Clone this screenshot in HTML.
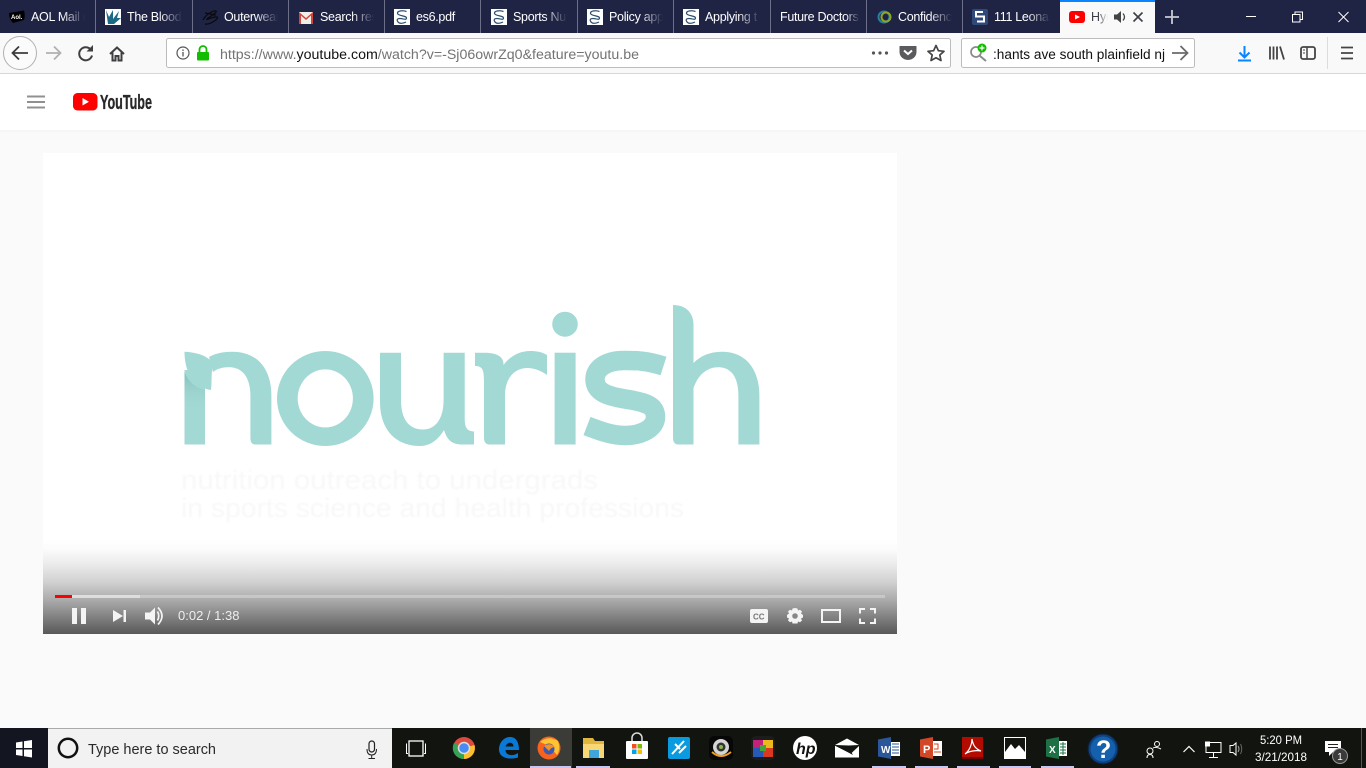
<!DOCTYPE html>
<html lang="en"><head><meta charset="utf-8"><title>YouTube</title>
<style>
html,body{margin:0;padding:0;width:1366px;height:768px;overflow:hidden;background:#fafafa}
svg{display:block}
text{font-family:"Liberation Sans",sans-serif}
.t{fill:#fff;font-size:12.5px;letter-spacing:-.3px}
</style></head><body>
<svg width="1366" height="768" viewBox="0 0 1366 768" xmlns="http://www.w3.org/2000/svg">
<defs>
<linearGradient id="vg" x1="0" y1="0" x2="0" y2="1">
<stop offset="0" stop-color="#fff"/><stop offset=".1" stop-color="#fbfbfb"/><stop offset=".25" stop-color="#ececec"/><stop offset=".44" stop-color="#d2d2d2"/><stop offset=".65" stop-color="#a8a8a8"/><stop offset=".85" stop-color="#7a7a7a"/><stop offset="1" stop-color="#585858"/>
</linearGradient>
<linearGradient id="fd" x1="0" y1="0" x2="1" y2="0"><stop offset="0" stop-color="#1f2344" stop-opacity="0"/><stop offset=".7" stop-color="#1f2344"/><stop offset="1" stop-color="#1f2344"/></linearGradient>
<linearGradient id="fa" x1="0" y1="0" x2="1" y2="0"><stop offset="0" stop-color="#f9f9fa" stop-opacity="0"/><stop offset="1" stop-color="#f9f9fa"/></linearGradient>
<linearGradient id="sh" x1="0" y1="0" x2="0" y2="1"><stop offset="0" stop-color="#7fbdb9" stop-opacity=".9"/><stop offset="1" stop-color="#a3d9d5" stop-opacity="0"/></linearGradient>
<g id="sp"><rect width="16" height="16" fill="#fff"/><path d="M12.500 2.500C8 1 3 2 3.500 4.500S12.500 6.500 12.500 9 9 9.500 6 9.500 2.500 11 4 13 9 14.500 12 13" fill="none" stroke="#2d4f70" stroke-width="1.200"/></g>
</defs>

<!-- tab bar -->
<rect width="1366" height="33" fill="#1f2344"/>

<path d="M9 13L24 10.500Q25.500 16 24 20L13 23Q9 19 9 13Z" fill="#000"/><text x="11" y="19" font-weight="700" fill="#fff" style="font-size:6px">Aol.</text>
<text class="t" x="31" y="21">AOL Mail (</text>

<rect x="105" y="9" width="16" height="16" fill="#fff"/><path d="M106 10L109 17L113 10L113 19L119 11L117 18L121 18L114 24L108 24Z" fill="#1a6a86"/>
<text class="t" x="127" y="21">The Blood</text>

<path d="M203 20C206 14 214 10 216 11S209 17 207 19 214 16 217 17 210 25 205 24M205 13L216 15" fill="none" stroke="#0a0a0a" stroke-width="1.200"/>
<text class="t" x="224" y="21">Outerwear</text>

<rect x="299" y="12" width="14" height="12" fill="#f1eeea"/><path d="M299 12L306 18L313 12V24H311V15.500L306 20L301 15.500V24H299Z" fill="#d1453b"/>
<text class="t" x="320" y="21">Search resu</text>

<use href="#sp" x="394" y="9"/><text class="t" x="416" y="21">es6.pdf</text>
<use href="#sp" x="491" y="9"/><text class="t" x="513" y="21">Sports Nut</text>
<use href="#sp" x="587" y="9"/><text class="t" x="609" y="21">Policy app</text>
<use href="#sp" x="683" y="9"/><text class="t" x="705" y="21">Applying t</text>
<text class="t" x="780" y="21">Future Doctors</text>
<circle cx="884" cy="17" r="5.500" fill="none" stroke="#2a7f9e" stroke-width="2"/><circle cx="886" cy="17" r="4.500" fill="none" stroke="#8fa821" stroke-width="2"/>
<text class="t" x="898" y="21">Confidenc</text>
<rect x="972" y="9" width="16" height="16" rx="2" fill="#2f4a78"/><path d="M983 12H976V16.500H984V21.500H977" fill="none" stroke="#fff" stroke-width="2"/>
<text class="t" x="994" y="21">111 Leonar</text>

<rect x="62" y="3" width="33" height="28" fill="url(#fd)"/><rect x="159" y="3" width="33" height="28" fill="url(#fd)"/><rect x="255" y="3" width="33" height="28" fill="url(#fd)"/><rect x="351" y="3" width="33" height="28" fill="url(#fd)"/><rect x="544" y="3" width="33" height="28" fill="url(#fd)"/><rect x="640" y="3" width="33" height="28" fill="url(#fd)"/><rect x="737" y="3" width="33" height="28" fill="url(#fd)"/><rect x="845" y="3" width="21" height="28" fill="url(#fd)"/><rect x="929" y="3" width="33" height="28" fill="url(#fd)"/><rect x="1027" y="3" width="33" height="28" fill="url(#fd)"/>
<g stroke="#6c6f88" stroke-width="1"><path d="M95.500 0V33M192.500 0V33M288.500 0V33M384.500 0V33M480.500 0V33M577.500 0V33M673.500 0V33M770.500 0V33M866.500 0V33M962.500 0V33"/></g>

<!-- active tab -->
<rect x="1060" y="0" width="95" height="33" fill="#f9f9fa"/><rect x="1060" y="0" width="95" height="2" fill="#0a84ff"/>
<rect x="1069" y="11" width="16" height="12" rx="3" fill="#f00"/><path d="M1075 14.500L1080 17L1075 19.500Z" fill="#fff"/>
<text x="1091" y="21" fill="#3c3c46" style="font-size:12.500px">Hyd</text>
<rect x="1098" y="5" width="10" height="26" fill="url(#fa)"/><rect x="1108" y="5" width="5" height="26" fill="#f9f9fa"/>
<path d="M1114 14.500H1117L1121 11V23L1117 19.500H1114Z" fill="#444"/><path d="M1123 13.500Q1126 17 1123 20.500" fill="none" stroke="#444" stroke-width="1.300"/>
<path d="M1133.500 12.500L1142.500 21.500M1142.500 12.500L1133.500 21.500" stroke="#3f3f46" stroke-width="1.600"/>
<path d="M1172 10V24M1165 17H1179" stroke="#c9cad4" stroke-width="1.800"/>
<!-- window controls -->
<path d="M1246 16.500H1256" stroke="#fff" stroke-width="1"/>
<path d="M1292.500 14.500h7.500v7.500h-7.500zM1295 14.500v-2.500h7.500v7.500h-2.500" fill="none" stroke="#fff" stroke-width="1"/>
<path d="M1338.500 12L1348.500 22M1348.500 12L1338.500 22" stroke="#fff" stroke-width="1"/>

<!-- toolbar -->
<rect y="33" width="1366" height="40" fill="#f9f9fa"/><rect y="73" width="1366" height="1" fill="#d7d7db"/>
<circle cx="20" cy="53" r="16.500" fill="#fbfbfb" stroke="#b1b1b3"/>
<path d="M28 53H13M19 46.500L12.500 53L19 59.500" fill="none" stroke="#3c3c3f" stroke-width="1.800"/>
<path d="M61 53H46M54 46.500L60.500 53L54 59.500" fill="none" stroke="#b1b1b3" stroke-width="1.800"/>
<path d="M91 50A6.500 6.500 0 1 0 92 55.500" fill="none" stroke="#3f3f42" stroke-width="2"/><path d="M93 45V51.500H86.500Z" fill="#3f3f42"/>
<path d="M110 54L117 47.500L124 54M112.500 52.500V60.500H115.500V56H118.500V60.500H121.500V52.500" fill="none" stroke="#3f3f42" stroke-width="2"/>

<rect x="166.500" y="38.500" width="784" height="29" rx="2" fill="#fff" stroke="#bcbcbe"/>
<circle cx="183" cy="53" r="6" fill="none" stroke="#555" stroke-width="1.200"/><path d="M183 52V56.500M183 49.500V51" stroke="#555" stroke-width="1.300"/>
<rect x="197" y="52" width="12" height="8.500" rx="1" fill="#12bc00"/><path d="M199.500 52V49.500A3.500 3.500 0 0 1 206.500 49.500V52" fill="none" stroke="#12bc00" stroke-width="1.800"/>
<text y="59" x="220" fill="#737373" textLength="419" lengthAdjust="spacingAndGlyphs" style="font-size:13.500px">https://www.<tspan fill="#111">youtube.com</tspan>/watch?v=-Sj06owrZq0&amp;feature=youtu.be</text>
<circle cx="873.500" cy="53" r="1.600" fill="#555"/><circle cx="880" cy="53" r="1.600" fill="#555"/><circle cx="886.500" cy="53" r="1.600" fill="#555"/>
<path d="M900 46.500H916V52A8 7.500 0 0 1 900 52Z" fill="#5b5b5e" stroke="#5b5b5e" stroke-linejoin="round" stroke-width="1"/><path d="M904 50.500L908 54L912 50.500" fill="none" stroke="#fff" stroke-width="2"/>
<path d="M936 45.500L938.400 50.700L944 51.300L939.800 55L941 60.500L936 57.700L931 60.500L932.200 55L928 51.300L933.600 50.700Z" fill="none" stroke="#444" stroke-width="1.700" stroke-linejoin="round"/>

<rect x="961.500" y="38.500" width="233" height="29" rx="2" fill="#fff" stroke="#bcbcbe"/>
<circle cx="976" cy="52" r="5" fill="none" stroke="#8a8a8a" stroke-width="1.700"/><path d="M980 56L986 61" stroke="#8a8a8a" stroke-width="2"/>
<circle cx="982" cy="48" r="4.500" fill="#12bc00"/><path d="M982 45.500V50.500M979.500 48H984.500" stroke="#fff" stroke-width="1.200"/>
<text x="993" y="59" fill="#111" textLength="172" lengthAdjust="spacingAndGlyphs" style="font-size:13.500px">:hants ave south plainfield nj</text>
<path d="M1172 53H1187M1180.500 46L1187.500 53L1180.500 60" fill="none" stroke="#6a6a6a" stroke-width="1.800"/>

<path d="M1244.500 46V57M1239.500 52.500L1244.500 57.500L1249.500 52.500" fill="none" stroke="#0a84ff" stroke-width="2"/><rect x="1238" y="59.500" width="13" height="2" fill="#0a84ff"/>
<path d="M1270 46.500V59.500M1273.500 46.500V59.500M1277 46.500V59.500M1280 46.500L1284 59.500" stroke="#444" stroke-width="1.800" fill="none"/>
<rect x="1301" y="47" width="14" height="12" rx="2" fill="none" stroke="#444" stroke-width="1.800"/><path d="M1307 47V59" stroke="#444" stroke-width="1.500"/><path d="M1303 50H1305M1303 53H1305" stroke="#444"/>
<rect x="1327" y="37" width="1" height="32" fill="#dcdcdf"/>
<path d="M1341 47.500H1353M1341 53H1353M1341 58.500H1353" stroke="#444" stroke-width="1.800"/>

<!-- youtube masthead -->
<rect y="74" width="1366" height="56" fill="#fff"/>
<rect y="130" width="1366" height="2" fill="#f6f6f6"/>
<path d="M27 96.500H45M27 102H45M27 107.500H45" stroke="#909090" stroke-width="2"/>
<rect x="73" y="93" width="24.500" height="17.500" rx="4.500" fill="#f00"/><path d="M82.500 98L89 101.700L82.500 105.500Z" fill="#fff"/>
<text x="100" y="109" font-weight="700" fill="#282828" stroke="#282828" stroke-width=".35" textLength="52" lengthAdjust="spacingAndGlyphs" style="font-size:20px">YouTube</text>

<!-- video -->
<rect x="43" y="153" width="854" height="481" fill="#fff"/>
<rect x="43" y="540" width="854" height="94" fill="url(#vg)"/>

<!-- nourish logo -->
<g fill="#a3d9d5">
<!-- n -->
<rect x="184.500" y="370" width="20.500" height="74.500"/>
<path d="M271.400 444.500V396C271.400 368 257 351.700 232 351.700C224 351.700 216 353 209 357L213 372C218 368 224 367.300 229 367.300C243 367.300 250.400 378 250.400 396V438C250.400 442 252 444.500 255 444.500Z"/>
<path d="M184.500 351.700C198 352.500 209 356 213 364C211 373 212 382 211 390C197 388 184.500 376 184.500 351.700Z"/>
<!-- o -->
<path fill-rule="evenodd" d="M277 398.500A48.300 47.500 0 1 0 373.600 398.500A48.300 47.500 0 1 0 277 398.500ZM297.700 398.400A27.600 29 0 1 1 352.900 398.400A27.600 29 0 1 1 297.700 398.400Z"/>
<!-- u -->
<path d="M380 352.700H401V400C401 418 408 429.500 423 429.500C436 429.500 443.600 418 443.600 400V352.700H464.700V418C464.700 428 467 431 474 431.500V444.500H462C452 444.500 447 440 444 430C438 440 430 446 420 446C396 446 380 430 380 402Z"/>
<!-- r -->
<path d="M475 352.700H484C496 352.700 504 356 503.500 365C510 356 520 351 530 351C537 351 542 352 547 355V375C540 370 533 368 527 368C515 368 505 378 505 395V444.500H489C486 444.500 484 442 484 438V385C484 372 484 366 475 366Z"/>
<!-- i -->
<ellipse cx="565" cy="324.200" rx="12.800" ry="12.500"/>
<rect x="554.600" y="352.700" width="21" height="91.800"/>
<!-- h -->
<path d="M673 305C685 305 693.500 312 693.500 325V444.500H678C675 444.500 673 442 673 438Z"/>
<path d="M759.400 444.500V396C759.400 368 745 351.700 722 351.700C710 351.700 700 356 693.500 363V388C698 375 707 367.300 718 367.300C732 367.300 738.400 378 738.400 396V444.500Z"/>
</g>
<!-- s -->
<path d="M663.500 366C645 360 633 360.500 624 360.500C607 360.500 595 368 595 379C595 392 607 396 625 399C645 402 655.500 405 655.500 417C655.500 428 642 435.500 625 435.500C612 435.500 600 431 587 426" fill="none" stroke="#a3d9d5" stroke-width="19.500"/>
<path d="M184.500 372C188 381 195 388 205 390V412H184.500Z" fill="url(#sh)"/>
<g fill="#f8f8f9" style="filter:blur(.8px)">
<text x="181" y="489" textLength="417" lengthAdjust="spacingAndGlyphs" style="font-size:27px">nutrition outreach to undergrads</text>
<text x="181" y="517" textLength="503" lengthAdjust="spacingAndGlyphs" style="font-size:27px">in sports science and health professions</text>
</g>

<!-- player controls -->
<rect x="55" y="595" width="830" height="3" fill="#fff" fill-opacity=".28"/>
<rect x="55" y="595" width="85" height="3" fill="#fff" fill-opacity=".4"/>
<rect x="55" y="595" width="17" height="3" fill="#f00"/>
<g fill="#f4f4f4">
<rect x="72" y="608" width="5" height="16"/><rect x="81" y="608" width="5" height="16"/>
<path d="M113 610L123 616L113 622Z"/><rect x="123.500" y="610" width="2.500" height="12"/>
<path d="M145 612.500H150L155 607.500V624.500L150 619.500H145Z"/>
</g>
<path d="M157.500 611.500Q160 616 157.500 620.500M158 607.500Q166 616 158 624.500" fill="none" stroke="#f4f4f4" stroke-width="1.700"/>
<text x="178" y="620" fill="#eee" style="font-size:13px">0:02 / 1:38</text>
<rect x="750" y="609" width="18" height="14" rx="2" fill="#f4f4f4"/>
<text x="753" y="619.500" font-weight="700" fill="#777" style="font-size:8px">CC</text>
<path d="M795 608L797.500 608.500L798 610.500L800 609.800L802 611.500L801 613.500L803 615V617.500L801 618.500L802 620.500L800 622.300L798 621.500L797.500 623.500H792.500L792 621.500L790 622.300L788 620.500L789 618.500L787 617.500V615L789 613.500L788 611.500L790 609.800L792 610.500L792.500 608.500Z" fill="#f4f4f4"/><circle cx="795" cy="616" r="2.800" fill="#888"/>
<rect x="822" y="610" width="18" height="12" fill="none" stroke="#f4f4f4" stroke-width="2"/>
<path d="M860 613.500V609H865M870 609H875V613.500M875 618.500V623H870M865 623H860V618.500" fill="none" stroke="#f4f4f4" stroke-width="2"/>

<!-- taskbar -->
<rect y="728" width="1366" height="40" fill="#12150f"/>
<rect x="0" y="728" width="48" height="40" fill="#131520"/>
<path d="M16 742.500L22.500 741.500V748H16ZM24 741.300L32 740V748H24ZM16 749.500H22.500V756L16 755ZM24 749.500H32V757.500L24 756.300Z" fill="#fff"/>
<rect x="48" y="728" width="344" height="40" fill="#f2f2f2"/><rect x="48" y="728" width="344" height="1" fill="#a9a9a9"/>
<circle cx="68" cy="748" r="9.200" fill="none" stroke="#111" stroke-width="2.500"/>
<text x="88" y="754" fill="#2a2a2a" textLength="128" lengthAdjust="spacingAndGlyphs" style="font-size:14.500px">Type here to search</text>
<rect x="369" y="741" width="5.500" height="11" rx="2.700" fill="none" stroke="#222" stroke-width="1.200"/><path d="M367 749Q367 755 371.700 755T376.500 749M371.700 755V758M368.500 758.500H375" fill="none" stroke="#222"/>

<rect x="409" y="741" width="14" height="15" fill="none" stroke="#fff" stroke-width="1.300"/><path d="M406.500 743.500V753.500H408M425.500 743.500V753.500H424" fill="none" stroke="#fff"/>

<!-- chrome -->
<circle cx="464" cy="748" r="11" fill="#dd4b3e"/><path d="M464 748L474.500 745A11 11 0 0 1 464 759Z" fill="#fbc02d"/><path d="M464 748L464 759A11 11 0 0 1 454 743Z" fill="#34a353"/><circle cx="464" cy="748" r="5.500" fill="#4a8af4" stroke="#ddd" stroke-width="1.500"/>
<!-- edge -->
<path fill-rule="evenodd" d="M499 748C500 741 505 737 510 737C516 737 519 742 519 750H505.500C505.500 755 512 757 518 753V757.500C510 760 498 758.500 499 748ZM505.500 746.500H513.500C513.500 741.500 507 741.500 505.500 746.500Z" fill="#0a78d7"/>
<!-- firefox -->
<rect x="530" y="728" width="42" height="40" fill="#3b3c38"/>
<circle cx="549" cy="748" r="11.500" fill="#f7631d"/><path d="M540 742Q548 735 558 741Q561 749 557 755Q549 745 540 742Z" fill="#ffc233"/><circle cx="549" cy="749" r="5.500" fill="#3c59b8"/><path d="M544 746Q550 742 555 747Q551 747 549 751Z" fill="#f7931d"/>
<!-- explorer -->
<path d="M583 738H593L595 741H604V745H583Z" fill="#e0b540"/><rect x="583" y="744" width="21" height="14" fill="#f8d775"/><rect x="589" y="750" width="10" height="8" fill="#3fa6dd"/>
<!-- store -->
<rect x="626" y="741" width="22" height="18" rx="1" fill="#fff"/><path d="M632 741V738A5 5 0 0 1 642 738V741" fill="none" stroke="#ddd" stroke-width="1.500"/>
<rect x="632" y="744" width="4.500" height="4.500" fill="#f25022"/><rect x="637.500" y="744" width="4.500" height="4.500" fill="#7fba00"/><rect x="632" y="749.500" width="4.500" height="4.500" fill="#00a4ef"/><rect x="637.500" y="749.500" width="4.500" height="4.500" fill="#ffb900"/>
<!-- blue app -->
<rect x="668" y="737" width="22" height="22" rx="2" fill="#0a9adf"/><path d="M672 754L684 741M675 744L680 749M679 753L686 746" stroke="#fff" stroke-width="2"/>
<!-- webcam -->
<rect x="709" y="736" width="24" height="24" rx="5" fill="#070707"/><circle cx="721" cy="747" r="8" fill="#d5d5d5"/><circle cx="721" cy="747" r="4.500" fill="#333"/><circle cx="721" cy="747" r="2" fill="#8cb74a"/><path d="M712 752Q721 760 731 752" fill="none" stroke="#f0a020" stroke-width="2"/>
<!-- puzzle -->
<rect x="751" y="736" width="24" height="24" rx="5" fill="#1c1c1c"/><rect x="753" y="740" width="10" height="8" fill="#c4227a"/><rect x="763" y="740" width="10" height="8" fill="#eab91c"/><rect x="753" y="748" width="10" height="9" fill="#2759b8"/><rect x="763" y="748" width="10" height="9" fill="#d93a1f"/><rect x="760" y="745" width="6" height="6" fill="#46a53a"/>
<!-- hp -->
<circle cx="805" cy="748" r="12" fill="#fff"/><text x="796" y="754" font-style="italic" font-weight="700" fill="#12150f" style="font-size:16px">hp</text>
<!-- mail -->
<path d="M835 745.800L851 753.500L859 746V757.500H835Z" fill="#fff"/><path d="M835 745L847 738.500L859 745L849 745.500Z" fill="#fff"/><path d="M836 746L857 746L850 750L853 755Z" fill="#12150f"/>
<!-- word -->
<rect x="889" y="742" width="11" height="14" fill="#fff"/><path d="M878 739.500L891 737V759L878 756.500Z" fill="#2b579a"/><text x="881" y="753" font-weight="700" fill="#fff" style="font-size:10px">W</text><path d="M892 744H899M892 747H899M892 750H899M892 753H899" stroke="#2b579a"/>
<!-- powerpoint -->
<rect x="930" y="741" width="12" height="15" fill="#fff"/><path d="M920 739.500L933 737V759L920 756.500Z" fill="#d24726"/><text x="923" y="753" font-weight="700" fill="#fff" style="font-size:11px">P</text><path d="M934 752H941M934 744H938V749H934" stroke="#d24726" fill="none"/>
<!-- pdf -->
<rect x="962" y="737" width="21" height="20" fill="#b30b00"/><path d="M965 754C970 750 972 744 972 739C973 746 976 749 981 751C976 750 969 751 965 754Z" fill="none" stroke="#fff" stroke-width="1.200"/><rect x="962" y="757" width="21" height="2" fill="#700"/>
<!-- photos -->
<rect x="1004.500" y="737.500" width="21" height="21" fill="#12150f" stroke="#fff"/><path d="M1005 758V752L1011 744L1015 749L1019 745L1025 752V758Z" fill="#fff"/>
<!-- excel -->
<rect x="1056" y="741" width="11" height="15" fill="#fff"/><path d="M1046 739.500L1059 737V759L1046 756.500Z" fill="#1e7145"/><text x="1049" y="753" font-weight="700" fill="#fff" style="font-size:10px">X</text><path d="M1060 744H1066M1060 747H1066M1060 750H1066M1060 753H1066M1063 742V755" stroke="#1e7145"/>
<!-- help -->
<circle cx="1103" cy="749" r="15" fill="#10417f" stroke="#0b1f3d" stroke-width="1"/><circle cx="1103" cy="749" r="12.500" fill="#1560ad"/><text x="1096" y="758" font-weight="700" fill="#fff" style="font-size:25px">?</text>

<g fill="none" stroke="#fff" stroke-width="1">
<circle cx="1150" cy="751" r="3"/><circle cx="1157" cy="744" r="2.500"/><path d="M1147 758Q1147 754.500 1150 754.500T1153 758M1153 748Q1156 746.500 1161 749"/>
<path d="M1183.500 752L1189 746.500L1194.500 752" stroke-width="1.200"/>
<rect x="1206" y="742.500" width="15" height="10"/><path d="M1213.500 752.500V757M1209 757.500H1218"/><rect x="1205.500" y="742" width="4" height="4" fill="#fff"/>
<path d="M1230 745.500H1233L1236 743V755L1233 752.500H1230Z"/><path d="M1238 746Q1240 749 1238 752" stroke="#aaa"/><path d="M1240.500 744Q1243 749 1240.500 754" stroke="#666"/>
</g>
<text x="1281" y="744" text-anchor="middle" fill="#fff" textLength="42" lengthAdjust="spacingAndGlyphs" style="font-size:12px">5:20 PM</text>
<text x="1281" y="761" text-anchor="middle" fill="#fff" textLength="52" lengthAdjust="spacingAndGlyphs" style="font-size:12px">3/21/2018</text>
<path d="M1325 741H1341V752H1333L1329 756V752H1325Z" fill="#fff"/><path d="M1328 744.500H1338M1328 747.500H1338" stroke="#222"/>
<circle cx="1340" cy="756" r="7.500" fill="#3a3a3a" stroke="#9a9a9a"/><text x="1340" y="760" text-anchor="middle" fill="#fff" style="font-size:10px">1</text>
<rect x="1361" y="728" width="1" height="40" fill="#555"/>

<!-- taskbar active underlines -->
<g fill="#c9c4f0">
<rect x="530" y="766" width="41" height="2"/><rect x="576" y="766" width="34" height="2"/><rect x="872" y="766" width="34" height="2"/><rect x="915" y="766" width="33" height="2"/><rect x="957" y="766" width="33" height="2"/><rect x="999" y="766" width="32" height="2"/><rect x="1041" y="766" width="33" height="2"/>
</g>
</svg>
</body></html>
